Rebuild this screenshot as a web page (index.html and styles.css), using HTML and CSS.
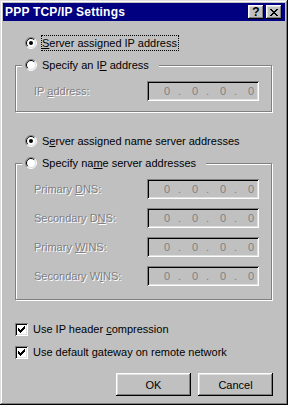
FILE: index.html
```html
<!DOCTYPE html>
<html lang="en">
  <head>
    <meta charset="UTF-8" />
    <meta name="viewport" content="width=device-width, initial-scale=1.0" />
    <title>PPP TCP/IP Settings</title>
    <link rel="stylesheet" href="styles.css">
  </head>
  <body>
    <div class="window">
      <div class="titlebar">
        <span class="title">PPP TCP/IP Settings</span>
        <span class="title-btn">?</span>
        <span class="title-btn">
          <svg width="8" height="7" viewBox="0 0 8 7"><path d="M0 0h2v1h-2z M6 0h2v1h-2z M1 1h2v1h-2z M5 1h2v1h-2z M2 2h4v1h-4z M3 3h2v1h-2z M2 4h4v1h-4z M1 5h2v1h-2z M5 5h2v1h-2z M0 6h2v1h-2z M6 6h2v1h-2z" /></svg>
        </span>
      </div>

      <div class="dialog">
        <label class="option top">
          <svg class="radio" width="12" height="12" viewBox="0 0 12 12"><circle cx="6" cy="6" r="5" fill="#fff" /><path d="M2.1 9.9A5.5 5.5 0 0 1 9.9 2.1" /><path class="lo" d="M9.9 2.1A5.5 5.5 0 0 1 2.1 9.9" /><path class="in" d="M2.8 9.2A4.5 4.5 0 0 1 9.2 2.8" /><path class="in-lo" d="M9.2 2.8A4.5 4.5 0 0 1 2.8 9.2" /><circle class="dot" cx="6" cy="6" r="2" /></svg>
          <span class="focus"><u>S</u>erver assigned IP address</span>
        </label>

        <div class="group first-group">
          <label class="option legend">
            <svg class="radio" width="12" height="12" viewBox="0 0 12 12"><circle cx="6" cy="6" r="5" fill="#fff" /><path d="M2.1 9.9A5.5 5.5 0 0 1 9.9 2.1" /><path class="lo" d="M9.9 2.1A5.5 5.5 0 0 1 2.1 9.9" /><path class="in" d="M2.8 9.2A4.5 4.5 0 0 1 9.2 2.8" /><path class="in-lo" d="M9.2 2.8A4.5 4.5 0 0 1 2.8 9.2" /></svg>
            <span>Specify an I<u>P</u> address</span>
          </label>
          <div class="field-row">
            <span class="field-label disabled">IP <u>a</u>ddress:</span>
            <span class="ip"><span>0</span><span>.</span><span>0</span><span>.</span><span>0</span><span>.</span><span>0</span></span>
          </div>
        </div>

        <label class="option middle">
          <svg class="radio" width="12" height="12" viewBox="0 0 12 12"><circle cx="6" cy="6" r="5" fill="#fff" /><path d="M2.1 9.9A5.5 5.5 0 0 1 9.9 2.1" /><path class="lo" d="M9.9 2.1A5.5 5.5 0 0 1 2.1 9.9" /><path class="in" d="M2.8 9.2A4.5 4.5 0 0 1 9.2 2.8" /><path class="in-lo" d="M9.2 2.8A4.5 4.5 0 0 1 2.8 9.2" /><circle class="dot" cx="6" cy="6" r="2" /></svg>
          <span>S<u>e</u>rver assigned name server addresses</span>
        </label>

        <div class="group second-group">
          <label class="option legend">
            <svg class="radio" width="12" height="12" viewBox="0 0 12 12"><circle cx="6" cy="6" r="5" fill="#fff" /><path d="M2.1 9.9A5.5 5.5 0 0 1 9.9 2.1" /><path class="lo" d="M9.9 2.1A5.5 5.5 0 0 1 2.1 9.9" /><path class="in" d="M2.8 9.2A4.5 4.5 0 0 1 9.2 2.8" /><path class="in-lo" d="M9.2 2.8A4.5 4.5 0 0 1 2.8 9.2" /></svg>
            <span>Specify na<u>m</u>e server addresses</span>
          </label>
          <div class="field-row">
            <span class="field-label disabled">Primary <u>D</u>NS:</span>
            <span class="ip"><span>0</span><span>.</span><span>0</span><span>.</span><span>0</span><span>.</span><span>0</span></span>
          </div>
          <div class="field-row">
            <span class="field-label disabled">Secondary D<u>N</u>S:</span>
            <span class="ip"><span>0</span><span>.</span><span>0</span><span>.</span><span>0</span><span>.</span><span>0</span></span>
          </div>
          <div class="field-row">
            <span class="field-label disabled">Primary <u>W</u>INS:</span>
            <span class="ip"><span>0</span><span>.</span><span>0</span><span>.</span><span>0</span><span>.</span><span>0</span></span>
          </div>
          <div class="field-row">
            <span class="field-label disabled">Secondary W<u>I</u>NS:</span>
            <span class="ip"><span>0</span><span>.</span><span>0</span><span>.</span><span>0</span><span>.</span><span>0</span></span>
          </div>
        </div>

        <label class="check first-check">
          <span class="box"><svg width="7" height="7" viewBox="0 0 7 7"><path d="M0 2h1v3h-1z M1 3h1v3h-1z M2 4h1v3h-1z M3 3h1v3h-1z M4 2h1v3h-1z M5 1h1v3h-1z M6 0h1v3h-1z" /></svg></span>
          <span>Use IP header <u>c</u>ompression</span>
        </label>
        <label class="check second-check">
          <span class="box"><svg width="7" height="7" viewBox="0 0 7 7"><path d="M0 2h1v3h-1z M1 3h1v3h-1z M2 4h1v3h-1z M3 3h1v3h-1z M4 2h1v3h-1z M5 1h1v3h-1z M6 0h1v3h-1z" /></svg></span>
          <span>Use default <u>g</u>ateway on remote network</span>
        </label>

        <div class="buttons">
          <button type="button">OK</button>
          <button type="button">Cancel</button>
        </div>
      </div>
    </div>
  </body>
</html>
```

FILE: styles.css
```css
body {
  margin: 0;
  font-family: "Liberation Sans", Arial, sans-serif;
  font-size: 11px;
  color: #000;
}
.window {
  width: 288px;
  height: 405px;
  box-sizing: border-box;
  padding: 3px;
  background: #c0c0c0;
  box-shadow: inset -1px -1px #000, inset 1px 1px #dfdfdf,
    inset -2px -2px #808080, inset 2px 2px #fff;
}
.titlebar {
  height: 18px;
  display: flex;
  align-items: center;
  gap: 2px;
  padding: 0 3px 0 2px;
  background: #000080;
}
.title {
  flex: 1;
  color: #fff;
  font-weight: bold;
  font-size: 12px;
  letter-spacing: 0.2px;
}
.title-btn {
  width: 16px;
  height: 14px;
  display: flex;
  align-items: center;
  justify-content: center;
  background: #c0c0c0;
  box-shadow: inset -1px -1px #000, inset 1px 1px #fff,
    inset -2px -2px #808080, inset 2px 2px #dfdfdf;
  font-weight: bold;
  font-size: 12px;
  line-height: 14px;
}
.dialog {
  padding: 0 12px;
}

/* radio rows */
.option {
  display: flex;
  align-items: center;
  gap: 5px;
  height: 16px;
  line-height: 16px;
}
.option.top {
  margin: 14px 0 0 10px;
}
.option.middle {
  margin: 21px 0 0 10px;
}
.radio {
  flex: none;
}
.radio path {
  fill: none;
  stroke: #808080;
}
.radio path.lo {
  stroke: #fff;
}
.radio path.in {
  stroke: #000;
}
.radio path.in-lo {
  stroke: #dfdfdf;
}
.radio .dot {
  fill: #000;
}
.focus {
  line-height: 14px;
  padding-right: 1px;
  outline: 1px dotted #000;
}

/* group boxes */
.group {
  margin: 14px 1px 0 0;
  border: 1px solid #808080;
  box-shadow: inset 1px 1px #fff, 1px 1px #fff;
}
.first-group {
  padding-bottom: 10px;
}
.second-group {
  padding-bottom: 13px;
}
.option.legend {
  width: fit-content;
  margin: -9px 0 0 6px;
  padding: 0 10px 0 3px;
  background: #c0c0c0;
}
.field-row {
  display: flex;
  align-items: center;
  height: 20px;
  margin: 9px 0 0 18px;
}
.legend + .field-row {
  margin-top: 8px;
}
.field-label {
  width: 113px;
}
.disabled {
  color: #808080;
  text-shadow: 1px 1px #fff;
}
.ip {
  width: 112px;
  height: 20px;
  box-sizing: border-box;
  display: flex;
  align-items: center;
  padding-left: 17px;
  color: #808080;
  box-shadow: inset 1px 1px #808080, inset -1px -1px #fff,
    inset 2px 2px #000, inset -2px -2px #dfdfdf;
}
.ip span {
  width: 14px;
  flex: none;
}

/* check boxes */
.check {
  display: flex;
  align-items: center;
  gap: 5px;
  height: 13px;
  line-height: 13px;
}
.first-check {
  margin-top: 23px;
}
.second-check {
  margin-top: 10px;
}
.box {
  width: 13px;
  height: 13px;
  box-sizing: border-box;
  display: flex;
  align-items: center;
  justify-content: center;
  background: #fff;
  box-shadow: inset 1px 1px #808080, inset -1px -1px #fff,
    inset 2px 2px #000, inset -2px -2px #dfdfdf;
}

/* dialog buttons */
.buttons {
  display: flex;
  justify-content: flex-end;
  gap: 7px;
  margin-top: 14px;
}
button {
  width: 75px;
  height: 23px;
  padding: 0;
  border: none;
  background: #c0c0c0;
  font-family: inherit;
  font-size: 11px;
  color: #000;
  box-shadow: inset -1px -1px #000, inset 1px 1px #fff,
    inset -2px -2px #808080, inset 2px 2px #dfdfdf;
}
```
